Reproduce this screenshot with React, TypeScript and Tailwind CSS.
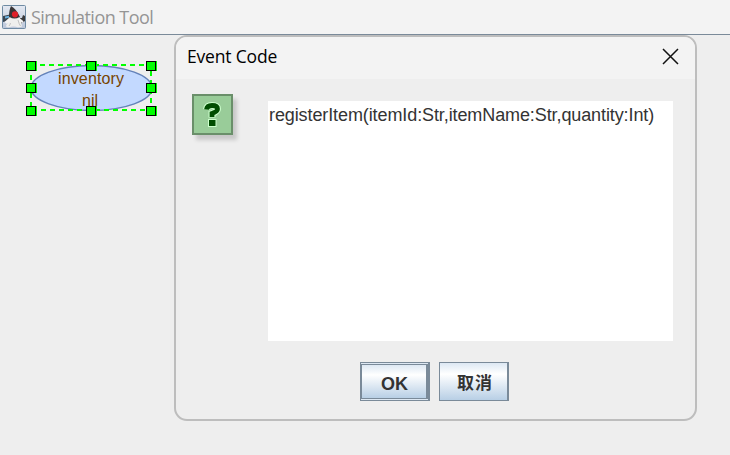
const handles = [
  [26, 61], [86, 61], [146, 61],
  [26, 83], [146, 83],
  [26, 106], [86, 106], [146, 106],
];

function DukeIcon() {
  return (
    <svg width="24" height="24" viewBox="0 0 24 24" className="shrink-0">
      <defs>
        <linearGradient id="duke" x1="0" y1="0" x2="0" y2="1">
          <stop offset="0" stopColor="#e4e9f2" />
          <stop offset="1" stopColor="#bcc6d9" />
        </linearGradient>
      </defs>
      <rect x="0.5" y="0.5" width="23" height="23" rx="1" fill="url(#duke)" stroke="#6f8ba3" />
      <path d="M1 11l7-1.500v6l-7 1.500z" fill="#3c4650" />
      <path d="M3 11.500l4-.8v2l-4 .8z" fill="#6cb2e2" />
      <path d="M17 13l3 0 1-3 2 1v5l-4 2.500z" fill="#3a3a3c" />
      <path d="M9 1q5 2.500 9 11l-1 4H8L7 12q0-7 2-11z" fill="#3a3536" />
      <path d="M7.500 12q5 3 10 0 1.500 5 2.500 9.500-3 1.500-6 .3-3.500-1-7 .5-3 0-3-1.500 3-4 3.500-8.800z" fill="#efefed" />
      <path d="M7.500 12.500L2.500 17l2 1.800L8 16.500zM17 12.500l4.500 3.800-1 1.700-3.500-1.500z" fill="#f4f4f4" />
      <path d="M8.500 18q-.5 2-1.500 3M16 15q1 4 2.500 6" fill="none" stroke="#b5b5b5" strokeWidth="0.800" />
      <circle cx="13" cy="9.300" r="3.100" fill="#df2028" />
    </svg>
  );
}

function QuestionIcon() {
  return (
    <div className="h-[41px] w-[41px] border-2 border-[#6a8f6a] bg-[#99cc99] shadow-[4px_5px_4px_rgba(0,0,0,0.16)]">
      <svg width="37" height="37" viewBox="2 2 37 37" fill="none">
        <g stroke="#ccffcc">
          <path d="M14.500 15.500Q15 11.500 20 11.500Q25.500 11.500 25.500 15Q25.500 17.500 20 19.500V23.500" strokeWidth="7" />
          <path d="M16 25h8.500v8H16z" fill="#ccffcc" stroke="none" />
        </g>
        <g stroke="#004d00">
          <path d="M14.500 15.500Q15 11.500 20 11.500Q25.500 11.500 25.500 15Q25.500 17.500 20 19.500V23" strokeWidth="4.800" />
          <path d="M17 26h6.500v6H17z" fill="#004d00" stroke="none" />
        </g>
      </svg>
    </div>
  );
}

export default function App() {
  return (
    <div className="flex h-[455px] w-[730px] flex-col overflow-hidden bg-[#eeeeee] font-['Liberation_Sans','Noto_Sans_CJK_SC',sans-serif]">
      <header className="flex h-[35px] shrink-0 items-center gap-[5px] border-b border-[#7a8a99] bg-[#f3f3f3] pl-[2px]">
        <DukeIcon />
        <h1 className="whitespace-nowrap font-['Open_Sans',sans-serif] text-[18px] leading-6 tracking-[-0.53px] text-[#959595]">Simulation Tool</h1>
      </header>

      <main className="min-h-0 flex-1">
        <div className="absolute left-0 top-0 h-[120px] w-[170px]">
          <svg width="170" height="120" viewBox="0 0 170 120">
            <ellipse cx="91.500" cy="88" rx="60.500" ry="22.500" fill="#c3d9ff" stroke="#6482b9" strokeWidth="1.500" />
            <text x="91" y="84" textAnchor="middle" fontSize="16" fill="#774400" textLength="66">inventory</text>
            <text x="90" y="106" textAnchor="middle" fontSize="16" fill="#774400">nil</text>
            <rect x="31" y="65" width="120" height="45" fill="none" stroke="#00ff00" strokeWidth="2" strokeDasharray="5 4" />
            {handles.map(([x, y]) => (
              <g key={`${x}-${y}`} shapeRendering="crispEdges">
                <rect x={x} y={y} width="11" height="10" fill="#00ff00" />
                <rect x={x + 0.5} y={y + 0.5} width="9" height="9" fill="#00ff00" stroke="#000" />
              </g>
            ))}
          </svg>
        </div>

        <section className="absolute left-[174px] top-[35px] flex h-[386px] w-[523px] flex-col overflow-hidden rounded-[13px] border-2 border-[#bdbdbd] bg-[#eeeeee]">
          <div className="flex h-[42px] shrink-0 items-center justify-between bg-[#f3f3f3] pb-[3px] pl-[11px] pr-[16px]">
            <h2 className="-mt-[2px] whitespace-nowrap font-['Open_Sans',sans-serif] text-[17.500px] leading-6 tracking-[-0.18px] text-black">Event Code</h2>
            <svg width="17" height="17" viewBox="0 0 17 17" stroke="#111" strokeWidth="1.500">
              <path d="M1 1l15 15M16 1L1 16" />
            </svg>
          </div>
          <div className="flex items-start gap-[35px] pl-4 pt-[15px]">
            <QuestionIcon />
            <div className="mt-[7px] h-[240px] w-[405px] whitespace-nowrap bg-white pl-px pt-[4px] text-[18px] leading-[20px] tracking-[-0.1px] text-[#333333]">
              registerItem(itemId:Str,itemName:Str,quantity:Int)
            </div>
          </div>
          <div className="mt-[21px] flex gap-[9px] pl-[184px] text-[17px] font-bold text-[#333333]">
            <button className="flex h-[39px] w-[70px] border border-r-2 border-[#7a8a99] bg-[#dde8f3] py-px">
              <span className="flex flex-1 items-center justify-center self-stretch border border-r-2 border-[#7a8a99] bg-linear-to-b from-[#dde8f3] via-white via-30% to-[#b8cfe5] pl-px pt-[5px] text-[18px]">OK</span>
            </button>
            <button className="flex h-[39px] w-[70px] items-center justify-center border border-r-2 border-[#7a8a99] bg-linear-to-b from-[#dde8f3] via-white via-30% to-[#b8cfe5] pl-[3px] pt-[5px] tracking-[1px]">取消</button>
          </div>
        </section>
      </main>
    </div>
  );
}
